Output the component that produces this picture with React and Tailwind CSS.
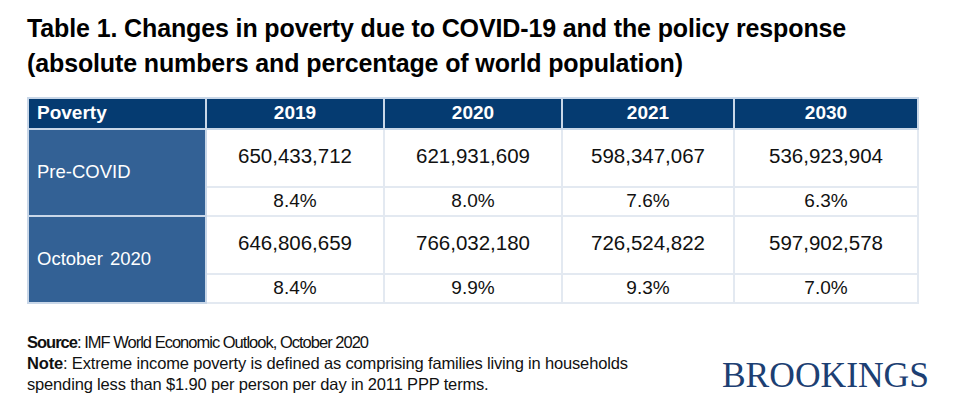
export default function App() {
  const rows = [
    {
      label: 'Pre-COVID',
      nums: ['650,433,712', '621,931,609', '598,347,067', '536,923,904'],
      pcts: ['8.4%', '8.0%', '7.6%', '6.3%'],
    },
    {
      label: 'October 2020',
      nums: ['646,806,659', '766,032,180', '726,524,822', '597,902,578'],
      pcts: ['8.4%', '9.9%', '9.3%', '7.0%'],
    },
  ]
  const years = ['2019', '2020', '2021', '2030']

  return (
    <div className="w-[960px] h-[412px] bg-white relative overflow-hidden font-['Liberation_Sans',Arial,sans-serif]">
      {/* Title */}
      <div className="pl-[27px] pt-[11px] text-[25px] leading-[35px] font-bold text-black tracking-[-0.005em]">
        <div>Table 1. Changes in poverty due to COVID-19 and the policy response</div>
        <div>(absolute numbers and percentage of world population)</div>
      </div>

      {/* Table */}
      <div className="ml-[27px] mt-[16px] w-[890px]">
        <table className="w-full border-collapse table-fixed">
          <colgroup>
            <col className="w-[178px]" />
            <col className="w-[178px]" />
            <col className="w-[178px]" />
            <col className="w-[172px]" />
            <col className="w-[184px]" />
          </colgroup>
          <thead>
            <tr className="h-[29px] bg-[#053b71] text-white text-[19px] font-bold">
              <th className="text-left pl-[8px] border-2 border-[#c9d7e8] font-bold">Poverty</th>
              {years.map((y) => (
                <th key={y} className="text-center border-2 border-[#c9d7e8] font-bold">{y}</th>
              ))}
            </tr>
          </thead>
          <tbody>
            {rows.map((r) => (
              <>
                <tr key={r.label + 'n'} className="h-[58px]">
                  <td rowSpan={2} className="bg-[#336195] text-white text-[18.5px] pl-[8px] border-2 border-[#c9d7e8] [word-spacing:2px]">
                    {r.label}
                  </td>
                  {r.nums.map((n, i) => (
                    <td key={i} className="text-center text-[20.5px] text-[#111] border-2 border-[#e3e9f1] pb-[2px]">{n}</td>
                  ))}
                </tr>
                <tr key={r.label + 'p'} className="h-[29px]">
                  {r.pcts.map((p, i) => (
                    <td key={i} className="text-center text-[19px] leading-[20px] text-[#111] border-2 border-[#e3e9f1]">{p}</td>
                  ))}
                </tr>
              </>
            ))}
          </tbody>
        </table>
      </div>

      {/* Footer */}
      <div className="flex items-end justify-between pl-[27px] pr-[31px] mt-[28px]">
        <div className="text-[16.5px] leading-[21px] text-[#111]">
          <div className="tracking-[-0.06em]"><span className="font-bold">Source</span>: IMF World Economic Outlook, October 2020</div>
          <div className="tracking-[-0.01em]"><span className="font-bold">Note</span>: Extreme income poverty is defined as comprising families living in households</div>
          <div className="tracking-[-0.01em]">spending less than $1.90 per person per day in 2011 PPP terms.</div>
        </div>
        <div className="font-['Liberation_Serif','Times_New_Roman',serif] text-[35.5px] leading-[36px] text-[#1d3f73] mb-[2px]">
          BROOKINGS
        </div>
      </div>
    </div>
  )
}
